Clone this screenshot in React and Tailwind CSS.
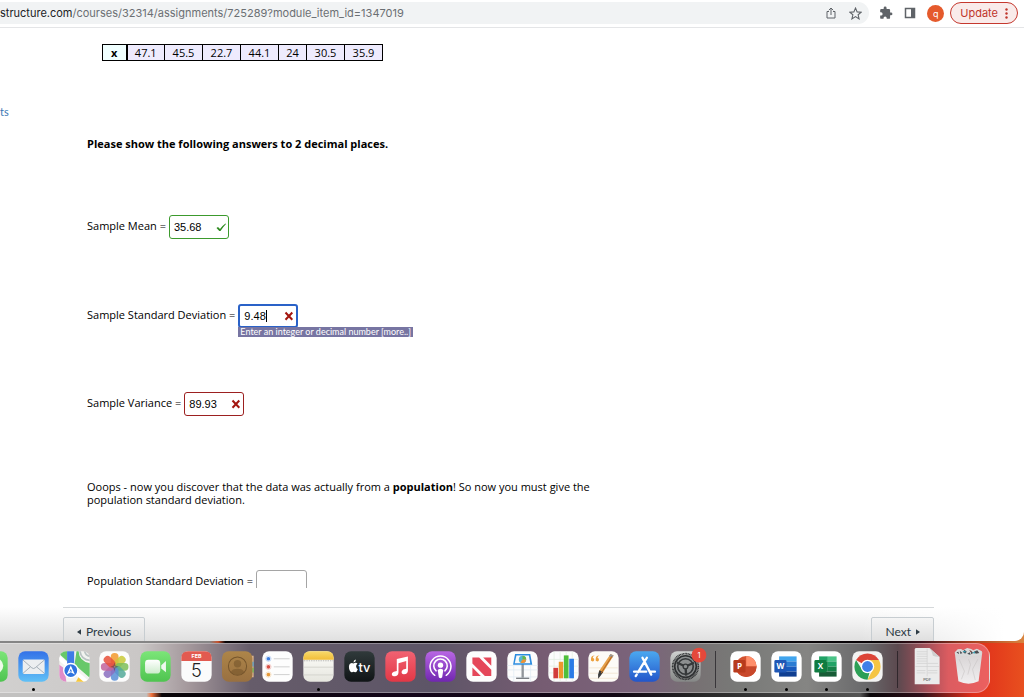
import React from "react";

const page = "font-['Trebuchet_MS','Open_Sans',sans-serif] text-[11px] leading-[13px] text-black";

function Check() {
  return (
    <svg viewBox="0 0 12 12" className="h-3 w-3" aria-hidden="true">
      <path d="M1.5 7 L3 6 L5 8 Q7 5 10.500 2.500 L11 3 Q8 6 5.500 10 L4.300 10 Z" fill="#2e8b1f" />
    </svg>
  );
}

function Cross() {
  return (
    <svg viewBox="0 0 12 12" className="h-3 w-3" aria-hidden="true">
      <path d="M2.500 2.500 L9.300 9.800 M9.300 2.500 L2.500 9.800" stroke="#a3160f" strokeWidth="2" fill="none" />
    </svg>
  );
}

function Answer({ id, label, value, frame, mark, caret, children }) {
  return (
    <div className="flex items-start gap-[3px]">
      <label htmlFor={id} className="py-1">{label}</label>
      <div className="relative">
        <div className={`flex h-6 w-[60px] items-center rounded-[3px] bg-white pl-1 pr-px ${frame}`}>
          <input
            id={id}
            defaultValue={value}
            className={`min-w-0 bg-transparent font-['Liberation_Sans',Arial,sans-serif] text-[11px] outline-none ${caret ? "[field-sizing:content]" : "flex-1"}`}
          />
          {caret && <span className="mr-auto h-3 w-px bg-black" />}
          {mark}
        </div>
        {children}
      </div>
    </div>
  );
}

function Tile({ name, dot, children }) {
  return (
    <button type="button" aria-label={name} className="flex w-[31px] shrink-0 flex-col items-center">
      <svg viewBox="0 0 92 92" className="h-[31px] w-[31px] overflow-visible" aria-hidden="true">{children}</svg>
      <span className={dot ? "mt-[6px] h-[3px] w-[3px] rounded-full bg-black" : "mt-[6px] h-[3px] w-[3px]"} />
    </button>
  );
}

const Base = ({ fill }) => <rect x="1" y="1" width="90" height="90" rx="20" fill={fill} />;

function Gradient({ id, from, to }) {
  return (
    <linearGradient id={id} x1="0" y1="0" x2="0" y2="1">
      <stop offset="0" stopColor={from} />
      <stop offset="1" stopColor={to} />
    </linearGradient>
  );
}

const petals = [
  ["#f29a2e", 0], ["#c9c93a", 45], ["#7fbf5a", 90], ["#55aa9a", 135],
  ["#5b8fd6", 180], ["#8a6fc0", 225], ["#c2649c", 270], ["#e8503a", 315],
];

function MainApps() {
  return (
    <>
      <Tile name="Messages"><Base fill="url(#green)" /><ellipse cx="46" cy="44" rx="32" ry="27" fill="#eefbea" /></Tile>
      <Tile name="Mail" dot>
        <Base fill="url(#mail)" />
        <rect x="14" y="25" width="65" height="43" rx="4" fill="#eceef0" />
        <path d="M15 27 L41 50 Q46 54 51 50 L78 27 M15 66 L37 47 M78 66 L55 47" fill="none" stroke="#9aa4ae" strokeWidth="2.5" />
      </Tile>
      <Tile name="Maps">
        <clipPath id="mapclip"><rect x="1" y="1" width="90" height="90" rx="20" /></clipPath>
        <g clipPath="url(#mapclip)">
          <rect width="92" height="92" fill="#f2f3f0" />
          <path d="M0 8 L24 30 L24 0 L0 0Z M52 0 L58 0 Q60 32 92 36 L92 80 L46 40Z" fill="#67c86a" />
          <path d="M0 40 L16 52 L22 92 L0 92Z" fill="#e08cc8" />
          <path d="M50 92 L62 70 L84 92Z" fill="#f7c83c" />
          <path d="M62 0 Q66 26 92 28 M76 0 Q78 14 92 16" fill="none" stroke="#b8c2c2" strokeWidth="5" />
          <path d="M0 20 L92 100" stroke="#fff" strokeWidth="12" />
          <path d="M24 0 H45 V50 H24Z" fill="#3f7ce6" />
        </g>
        <circle cx="35" cy="58" r="21" fill="#2f74e0" stroke="#fff" strokeWidth="4" />
        <path d="M35 43 L47 70 L35 63 L23 70Z" fill="#fff" />
        <path d="M35 53 L39 62 L35 60 L31 62Z" fill="#2f74e0" />
      </Tile>
      <Tile name="Photos">
        <Base fill="#fcfcfc" />
        {petals.map(([color, turn]) => (
          <rect key={turn} x="35" y="6" width="23" height="39" rx="11" fill={color} opacity="0.86" transform={`rotate(${turn} 46.500 47)`} />
        ))}
        <path d="M46 34 L49 43 L58 47 L49 50 L46 60 L43 50 L34 47 L43 43Z" fill="#574454" opacity="0.6" />
      </Tile>
      <Tile name="FaceTime">
        <Base fill="url(#green)" />
        <rect x="15" y="26" width="45" height="41" rx="10" fill="url(#pale)" />
        <path d="M63 42 L77 30 V63 L63 52Z" fill="#eef8ee" />
      </Tile>
      <Tile name="Calendar">
        <Base fill="#fbfbfb" />
        <path d="M1 30 V21 Q1 1 21 1 H71 Q91 1 91 21 V30Z" fill="#e25a50" />
        <text x="46" y="22" textAnchor="middle" fontFamily="Inter, sans-serif" fontSize="16" fontWeight="700" fill="#fff">FEB</text>
        <text x="46" y="77" textAnchor="middle" fontFamily="Inter, sans-serif" fontSize="54" fontWeight="300" fill="#222">5</text>
      </Tile>
      <Tile name="Contacts">
        <path d="M82 14 H94 V78 H82Z" fill="#d8b08a" /><path d="M90 32 H94 V46 H90Z" fill="#4c9ed0" /><path d="M90 50 H94 V64 H90Z" fill="#65b94e" />
        <rect x="0" y="1" width="90" height="90" rx="20" fill="url(#brown)" />
        <circle cx="46" cy="45" r="27" fill="none" stroke="#75552c" strokeWidth="3" />
        <circle cx="46" cy="38" r="11" fill="#75552c" opacity="0.6" />
        <path d="M26 63 Q30 53 46 53 Q62 53 66 63 Q46 79 26 63" fill="#75552c" opacity="0.6" />
      </Tile>
      <Tile name="Reminders">
        <Base fill="#fdfdfd" />
        {[["#3b7de0", 23], ["#d94f45", 47], ["#e59a3c", 70]].map(([c, y]) => (
          <g key={y}><circle cx="19" cy={y} r="8" fill="none" stroke={c} strokeWidth="1.500" opacity="0.5" /><circle cx="19" cy={y} r="5.500" fill={c} /><path d={`M35 ${y} H82`} stroke="#c9c9c9" strokeWidth="2.500" /></g>
        ))}
      </Tile>
      <Tile name="Notes" dot>
        <Base fill="url(#paper)" />
        <path d="M1 26 V21 Q1 1 21 1 H71 Q91 1 91 21 V26Z" fill="url(#yellow)" />
        <path d="M3 29 H90" stroke="#aaa" strokeWidth="2.500" strokeDasharray="4 3" />
        <path d="M3 48 H89 M3 71 H89" stroke="#cfcfca" strokeWidth="2.500" />
      </Tile>
      <Tile name="Apple TV">
        <Base fill="url(#tv)" />
        <path d="M28 37 Q35 33 40 37 Q35 41 36 47 Q37 52 41 54 Q38 63 33 63 Q28 60 24 63 Q18 64 15 52 Q13 38 21 36 Q25 35 28 37Z M28 34 Q28 27 35 25 Q36 32 28 34" fill="#fff" />
        <text x="43" y="62" fontFamily="Inter, sans-serif" fontSize="38" fontWeight="500" fill="#fff">tv</text>
      </Tile>
      <Tile name="Music">
        <Base fill="url(#music)" />
        <path d="M35 24 L68 16 V58 Q68 69 56 69 Q47 67 50 59 Q52 54 63 53 V30 L40 36 V64 Q39 76 27 75 Q18 73 21 65 Q24 60 35 59Z" fill="#fff" />
      </Tile>
      <Tile name="Podcasts">
        <Base fill="url(#pod)" />
        <path d="M29 72 A31 31 0 1 1 63 72 M33 59 A20 20 0 1 1 59 59" fill="none" stroke="#fff" strokeWidth="4.500" strokeLinecap="round" />
        <circle cx="46" cy="42" r="8" fill="#fff" /><path d="M38 58 Q38 53 46 53 Q54 53 54 58 L51 78 Q46 83 41 78Z" fill="#fff" />
      </Tile>
      <Tile name="News">
        <Base fill="#fdfdfd" />
        <path d="M19 19 H39 L75 56 V74 H56 L19 37Z M51 19 H75 V44Z M19 49 L44 74 H19Z" fill="#e5475a" />
      </Tile>
      <Tile name="Keynote">
        <Base fill="#fcfcfc" />
        <path d="M1 43 H91 M1 56 H91 M1 77 H91 M20 43 V91 M70 43 V91" stroke="#dce9f2" strokeWidth="2" />
        <path d="M43 35 H50 V79 H43Z" fill="#91959a" /><path d="M27 79 H66 V83 H27Z" fill="#777b80" />
        <path d="M24 9 H69 L75 41 H18Z" fill="#2b8ce0" /><path d="M28 13 H65 L69 36 H23Z" fill="#f8f8f8" />
        <circle cx="46" cy="25" r="11" fill="#55b7d5" /><path d="M46 25 V14 A11 11 0 0 1 57 25Z" fill="#69b746" /><path d="M46 25 H57 A11 11 0 0 1 40 34Z" fill="#ef9236" />
      </Tile>
      <Tile name="Numbers">
        <Base fill="#fcfcfc" />
        <path d="M18 1 V91 M36 1 V91 M54 1 V91 M72 1 V91 M1 25 H91 M1 45 H91 M1 65 H91" stroke="#e0ecdc" strokeWidth="2" />
        <path d="M16 50 H30 V81 H16Z" fill="#d23c3c" /><path d="M32 32 H45 V81 H32Z" fill="#ed972d" /><path d="M47 13 H61 V81 H47Z" fill="#4fbf3b" /><path d="M63 23 H77 V81 H63Z" fill="#2b7be6" />
      </Tile>
      <Tile name="Pages">
        <Base fill="#fdfbf7" />
        <path d="M4 50 H88 M4 66 H88 M4 81 H88" stroke="#f0dfca" strokeWidth="2" />
        <path d="M20 13 Q14 15 14 21 A5 5 0 1 1 9 24 Q8 14 20 13 M34 13 Q28 15 28 21 A5 5 0 1 1 23 24 Q22 14 34 13" fill="#eda03c" />
        <path d="M67 9 L76 13 L43 66 L32 61Z" fill="#e6a049" /><path d="M67 9 L76 13 L72 20 L62 15Z" fill="#999" /><path d="M34 57 L45 62 L38 73 L30 82 L30 70Z" fill="#3b3b3d" /><path d="M71 16 L39 65" stroke="#b96c25" strokeWidth="3" />
      </Tile>
      <Tile name="App Store">
        <Base fill="url(#store)" />
        <path d="M40 20 L66 70 M53 20 L27 63 M15 61 H51 M62 61 H77 M23 70 L20 74" stroke="#fff" strokeWidth="7" strokeLinecap="round" fill="none" />
      </Tile>
      <Tile name="System Settings">
        <Base fill="url(#silver)" />
        <circle cx="46" cy="46" r="38" fill="none" stroke="#2e3032" strokeWidth="5" strokeDasharray="3 1.500" />
        <circle cx="46" cy="46" r="32" fill="#8c8f90" stroke="#2e3032" strokeWidth="5" />
        <circle cx="46" cy="46" r="23" fill="none" stroke="#35383a" strokeWidth="5" />
        <path d="M46 46 L20 34 M46 46 L71 35 M46 46 L48 73" stroke="#35383a" strokeWidth="7" /><circle cx="46" cy="46" r="7" fill="#8c8f90" stroke="#35383a" strokeWidth="4" />
        <circle cx="86" cy="12" r="22" fill="#e5483b" />
        <text x="86" y="20" textAnchor="middle" fontFamily="Inter, sans-serif" fontSize="22" fill="#fff">1</text>
      </Tile>
    </>
  );
}

function OfficeSquare({ letter, color }) {
  return (
    <>
      <rect x="10" y="27" width="36" height="37" rx="4" fill={color} />
      <text x="28" y="54" textAnchor="middle" fontFamily="'Open Sans', sans-serif" fontSize="24" fontWeight="700" fill="#fff">{letter}</text>
    </>
  );
}

function OfficeApps() {
  return (
    <>
      <Tile name="PowerPoint" dot>
        <Base fill="#fff" />
        <circle cx="48" cy="46" r="31" fill="#d35230" /><path d="M48 15 A31 31 0 0 1 79 46 H48Z" fill="#ff8f6b" /><path d="M17 46 H79 A31 31 0 0 1 17 46" fill="#c8482b" />
        <OfficeSquare letter="P" color="#b83b1d" />
      </Tile>
      <Tile name="Word" dot>
        <Base fill="#fff" />
        <path d="M24 16 H76 V31 H24Z" fill="#41a5ee" /><path d="M24 31 H76 V46 H24Z" fill="#2b7cd3" /><path d="M24 46 H76 V61 H24Z" fill="#185abd" /><path d="M24 61 H76 V76 H24Z" fill="#103f91" />
        <OfficeSquare letter="W" color="#1f57b5" />
      </Tile>
      <Tile name="Excel" dot>
        <Base fill="#fff" />
        <path d="M24 16 H50 V31 H24Z" fill="#21a366" /><path d="M50 16 H76 V31 H50Z" fill="#4bc488" /><path d="M24 31 H50 V61 H24Z" fill="#107c41" /><path d="M50 31 H76 V46 H50Z" fill="#21a366" /><path d="M50 46 H76 V61 H50Z" fill="#158048" /><path d="M24 61 H76 V76 H24Z" fill="#185c37" />
        <OfficeSquare letter="X" color="#107c41" />
      </Tile>
      <Tile name="Chrome" dot>
        <Base fill="#f3f3f2" />
        <path d="M46 46 L12 27 A39 39 0 0 1 80 27Z" fill="#dc4437" />
        <path d="M46 27 H80 A39 39 0 0 1 46 85 L62 55Z" fill="#f5c544" />
        <path d="M12 27 L30 56 Q38 66 52 64 L46 85 A39 39 0 0 1 12 27" fill="#2c9f55" />
        <circle cx="46" cy="46" r="20" fill="#fff" /><circle cx="46" cy="46" r="16" fill="#3f7fe8" />
      </Tile>
    </>
  );
}

function Dock() {
  return (
    <nav aria-label="Dock" className="-ml-6 mr-[34px] flex h-[50px] items-start rounded-r-[14px] border border-white/30 bg-[linear-gradient(90deg,#d2d1d0_0%,#cac7c6_16%,#a3979b_21%,#665c6a_27%,#5d5567_45%,#765c72_56%,#7b647b_66%,#777173_71%,#787977_75%,#858583_82%,#68686a_88%,#5c494f_91%,#a8505a_94%,#dc5c60_96%,#ec605f_100%)] pt-[7px]">
      <svg width="0" height="0" className="shrink-0" aria-hidden="true">
        <defs>
          <Gradient id="green" from="#7be578" to="#4fc450" /><Gradient id="mail" from="#3472e8" to="#60c0f6" />
          <Gradient id="pale" from="#ffffff" to="#cdeccc" /><Gradient id="brown" from="#ad8549" to="#997040" />
          <Gradient id="paper" from="#fdfdf9" to="#e6e6df" /><Gradient id="yellow" from="#f8da6c" to="#f2bd38" />
          <Gradient id="tv" from="#303a3b" to="#101416" /><Gradient id="music" from="#f16272" to="#e23846" />
          <Gradient id="pod" from="#b866e4" to="#7127b0" /><Gradient id="store" from="#4ba8f0" to="#2356ca" />
          <Gradient id="silver" from="#cfd1d0" to="#858786" /><Gradient id="trash" from="#d6d2d3" to="#f1eff0" />
        </defs>
      </svg>
      <div className="flex min-w-0 flex-1 justify-between"><MainApps /></div>
      <div className="mx-[14px] h-[37px] w-px bg-[#39363a]" />
      <div className="flex w-[153px] justify-between"><OfficeApps /></div>
      <div className="mx-[14px] h-[37px] w-px bg-[#30272c]" />
      <div className="flex gap-[10px] pr-[5px]">
        <Tile name="PDF document">
          <path d="M11 -9 H52 L82 18 V99 H8 V-6Z" fill="#ebebeb" />
          <path d="M52 -9 L82 18 Q66 16 62 14 Q60 2 52 -9" fill="#cfcfcf" />
          <path d="M14 2 H45 M14 9 H45 M14 16 H45 M14 23 H45 M14 30 H45 M14 37 H45 M46 37 H77 M14 58 H40 M14 65 H40 M46 58 H75 M46 65 H75" stroke="#d0d0d0" strokeWidth="2" />
          <path d="M45 -7 V75 M10 46 H80" stroke="#cfcfcf" strokeWidth="2" />
          <text x="45" y="90" textAnchor="middle" fontFamily="Inter, sans-serif" fontSize="12" fill="#444">PDF</text>
        </Tile>
        <Tile name="Trash">
          <path d="M5 4 L16 90 Q46 104 76 90 L87 4Z" fill="url(#trash)" />
          <path d="M6 3 L14 -5 L24 -6 L30 -2 L42 -9 L54 -6 L60 -2 L71 -7 L86 1 L84 11 Q46 20 8 11Z" fill="#d9dada" />
          <path d="M20 -1 L28 6 L22 9Z M34 -4 L41 2 L36 8 L30 4Z M52 -2 L60 6 L54 10Z M62 2 L72 -2 L78 6 L68 8Z M42 8 L50 4 L52 12Z M10 4 L16 2 L18 10Z" fill="#4b4e53" />
          <path d="M28 0 L36 5 L38 0Z M58 5 L64 8 L66 1Z" fill="#2d9fb5" />
          <path d="M48 -3 L56 1 L52 4Z" fill="#8b4a40" />
          <path d="M18 24 L34 60 L25 84 M74 24 L58 54 L66 86 M46 24 L52 40 L44 70" fill="none" stroke="#c4bfc0" strokeWidth="2.500" opacity="0.6" />
        </Tile>
      </div>
    </nav>
  );
}

function BrowserBar() {
  return (
    <header className="flex h-7 shrink-0 items-center border-b border-[#e4e5e7] pb-px">
      <div className="flex h-[22px] flex-1 items-center rounded-r-full bg-[#f1f3f4] pr-[7px]">
        <p className="flex-1 whitespace-nowrap font-['Inter',sans-serif] text-[11px] text-[#6b6f73]">
          <span className="text-[#202124]">structure.com</span>/courses/32314/assignments/725289?module_item_id=1347019
        </p>
        <button type="button" aria-label="Share" className="mr-[12px]">
          <svg viewBox="0 0 12 12" className="h-3 w-3" fill="none" stroke="#5f6368"><path d="M4 4.500 H2 V11 H10 V4.500 H8 M6 8 V1 M3.800 3.200 L6 1 L8.200 3.200" /></svg>
        </button>
        <button type="button" aria-label="Bookmark">
          <svg viewBox="0 0 24 24" className="h-[13px] w-[13px]" fill="none" stroke="#5f6368" strokeWidth="2"><path d="M12 2 L15 9 L22.500 9.500 L16.800 14.300 L18.600 22 L12 17.800 L5.400 22 L7.200 14.300 L1.500 9.500 L9 9Z" /></svg>
        </button>
      </div>
      <div className="flex items-center gap-[11px] pl-[10px] pr-[6px]">
        <button type="button" aria-label="Extensions">
          <svg viewBox="0 0 24 24" className="h-[14px] w-[14px]" fill="#5f6368"><path d="M20.500 11H19V7a2 2 0 0 0-2-2h-4V3.500a2.500 2.500 0 0 0-5 0V5H4a2 2 0 0 0-2 2v3.800h1.500a2.700 2.700 0 0 1 0 5.400H2V20a2 2 0 0 0 2 2h3.800v-1.500a2.700 2.700 0 0 1 5.400 0V22H17a2 2 0 0 0 2-2v-4h1.500a2.500 2.500 0 0 0 0-5z" /></svg>
        </button>
        <button type="button" aria-label="Side panel">
          <svg viewBox="0 0 12 12" className="h-3 w-3"><path d="M1.500 1.500 H10.500 V10.500 H1.500Z" fill="none" stroke="#5f6368" strokeWidth="1.500" /><path d="M7 1 H11 V11 H7Z" fill="#5f6368" /></svg>
        </button>
        <button type="button" aria-label="Profile" className="flex h-[17px] w-[17px] items-center justify-center rounded-full bg-[#e55a2c] font-['Inter',sans-serif] text-[9px] leading-none text-white">q</button>
        <button type="button" className="-ml-[5px] flex h-[22px] items-center gap-[7px] rounded-full border border-[#c5382e] bg-[#f9ebea] px-[9px] font-['Inter',sans-serif] text-[11px] text-[#c0352b]">
          Update
          <svg viewBox="0 0 3 11" className="h-[11px] w-[3px]" fill="#c0352b" aria-hidden="true"><circle cx="1.500" cy="1.500" r="1.200" /><circle cx="1.500" cy="5.500" r="1.200" /><circle cx="1.500" cy="9.500" r="1.200" /></svg>
        </button>
      </div>
    </header>
  );
}

const values = ["47.1", "45.5", "22.7", "44.1", "24", "30.5", "35.9"];
const pager = "flex items-center gap-[5px] rounded-[2px] border border-[#c7cdd1] bg-[linear-gradient(#f5f5f5,#dadada)] px-[13px] py-[5px]";

export default function App() {
  return (
    <div className="flex h-screen flex-col overflow-hidden bg-[linear-gradient(90deg,#090508_0%,#090508_85%,#5a1420_90%,#b0481f_95%,#d98540_100%)]">
      <div className="flex min-h-0 flex-1 flex-col overflow-hidden rounded-br-[9px] bg-[linear-gradient(to_left,#fff_2%,transparent_16%),linear-gradient(to_top,#e0e0e0,#fff_34px)]">
        <BrowserBar />
        <main className="flex min-h-0 flex-1 items-start">
          <aside className="w-[63px] shrink-0 pt-[77px] font-['Lato',sans-serif] text-[11px] leading-[14px] text-[#3c78b4]"><a href="#assignments">ts</a></aside>
          <div className="mr-[90px] min-w-0 flex-1">
            <section className={`h-[560px] overflow-hidden pl-6 pt-4 ${page}`}>
              <table className="ml-[15px] border-collapse text-center">
                <tbody>
                  <tr className="h-4">
                    <th scope="row" className="w-6 border border-black border-r-2 bg-[#f0ffff] p-0 font-bold leading-[14px]">x</th>
                    {values.map((v) => <td key={v} className={`border border-black bg-[#eeebfd] p-0 leading-[14px] ${v.length > 2 ? "w-[38px]" : "w-7"}`}>{v}</td>)}
                  </tr>
                </tbody>
              </table>
              <p className="mt-[76px] font-bold">Please show the following answers to 2 decimal places.</p>
              <div className="mt-[65px]"><Answer id="mean" label="Sample Mean =" value="35.68" frame="border border-[#3c9a2d]" mark={<Check />} /></div>
              <div className="mt-[65px]">
                <Answer id="deviation" label="Sample Standard Deviation =" value="9.48" caret frame="border-2 border-[#2a62c8]" mark={<Cross />}>
                  <div role="tooltip" className="absolute left-0 top-[23px] whitespace-nowrap bg-[#7775a2] px-[2px] font-['Lato',sans-serif] text-[9px] leading-[10px] text-white">Enter an integer or decimal number [more..]</div>
                </Answer>
              </div>
              <div className="mt-[64px]"><Answer id="variance" label="Sample Variance =" value="89.93" frame="border border-[#9c2020]" mark={<Cross />} /></div>
              <p className="mt-[64px] max-w-[510px]">Ooops - now you discover that the data was actually from a <b>population</b>! So now you must give the population standard deviation.</p>
              <div className="mt-[64px] flex items-start gap-[3px]">
                <label htmlFor="population" className="py-1">Population Standard Deviation =</label>
                <input id="population" className="h-6 w-[51px] rounded-[3px] border border-[#a5a5a5] px-1" />
              </div>
            </section>
            <nav aria-label="Assignments" className="mt-[19px] flex justify-between border-t border-[#d5d8da] pt-[9px] font-['Lato',sans-serif] text-[12px] leading-[18px] text-[#2d3b45]">
              <a href="#previous" className={pager}><svg viewBox="0 0 6 8" className="h-[6px] w-1" aria-hidden="true"><path d="M6 0 V8 L0 4Z" fill="#2d3b45" /></svg>Previous</a>
              <a href="#next" className={pager}>Next<svg viewBox="0 0 6 8" className="h-[6px] w-1" aria-hidden="true"><path d="M0 0 V8 L6 4Z" fill="#2d3b45" /></svg></a>
            </nav>
          </div>
        </main>
      </div>
      <footer className="h-14 shrink-0 bg-[linear-gradient(90deg,#858585_0%,#858585_20.500%,#c8502a_21.300%,#090508_22%,#090508_86%,#3a101a_90%,#a8401f_95%,#d98540_100%),linear-gradient(90deg,#c2c1c0_0%,#c2c1c0_14.300%,#f0703a_14.800%,#090508_15.800%,#14061a_40%,#120814_60%,#262626_68%,#555_84%,#090508_85%,#30101a_90%,#e02d1a_95%,#e8501f_100%)] bg-[length:100%_2px,100%_100%] bg-no-repeat pt-[2px]"><Dock /></footer>
    </div>
  );
}
